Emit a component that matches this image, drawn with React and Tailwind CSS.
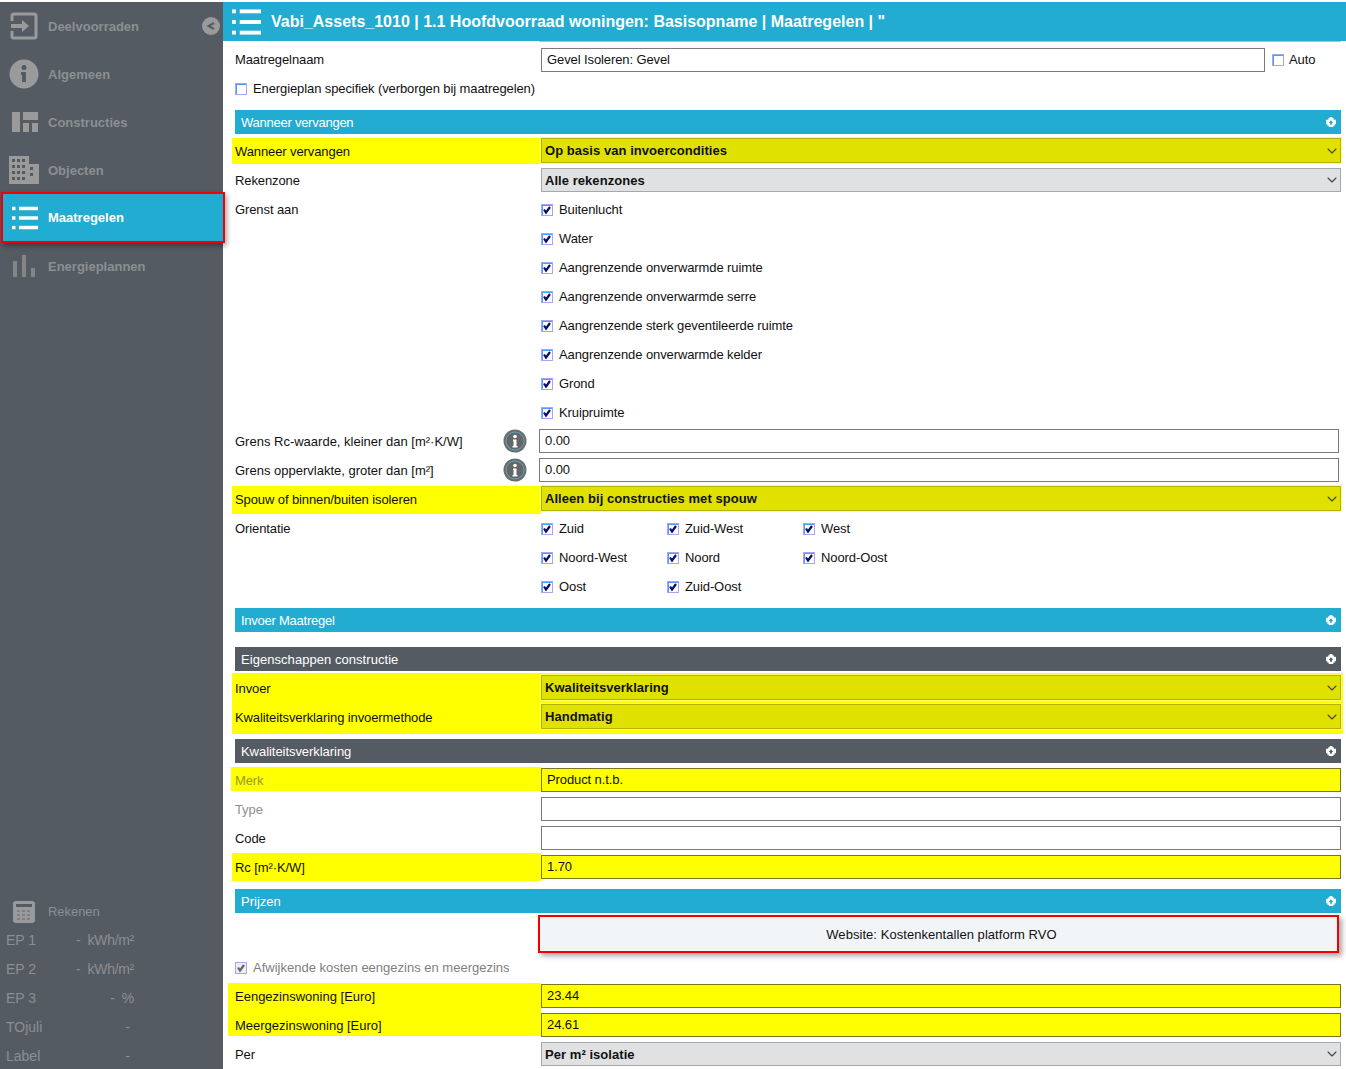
import { ChevronDown } from "lucide-react"

const font = { fontFamily: '"Liberation Sans", Arial, sans-serif' }

const ListIcon = ({ className }) => (
  <svg viewBox="0 0 30 26" className={className} fill="white">
    <rect x="0" y="0" width="4" height="4" />
    <rect x="8" y="0" width="22" height="4" />
    <rect x="0" y="11" width="4" height="4" />
    <rect x="8" y="11" width="22" height="4" />
    <rect x="0" y="22" width="4" height="4" />
    <rect x="8" y="22" width="22" height="4" />
  </svg>
)

const SignInIcon = () => (
  <svg viewBox="0 0 28 28" className="w-[28px] h-[28px]" fill="none" stroke="#9a9a9a">
    <path d="M2 9V4a2 2 0 0 1 2-2h20a2 2 0 0 1 2 2v20a2 2 0 0 1-2 2H4a2 2 0 0 1-2-2v-5" strokeWidth="3" />
    <path d="M1 12h11V8l7 6-7 6v-4H1z" fill="#9a9a9a" stroke="none" />
  </svg>
)

const InfoIcon = () => (
  <svg viewBox="0 0 30 30" className="w-[30px] h-[30px]">
    <circle cx="15" cy="15" r="14.5" fill="#9a9a9a" />
    <circle cx="15" cy="8.5" r="2.5" fill="#555b62" />
    <path d="M12 13h5v10h-4v-7h-1z" fill="#555b62" />
  </svg>
)

const LayoutIcon = () => (
  <svg viewBox="0 0 26 20" className="w-[26px] h-[20px] ml-[1px]" fill="#9a9a9a">
    <rect x="0" y="0" width="8" height="20" />
    <rect x="11" y="0" width="15" height="8" />
    <rect x="11" y="11" width="6" height="9" />
    <rect x="20" y="11" width="6" height="9" />
  </svg>
)

const BuildingIcon = () => (
  <svg viewBox="0 0 30 28" className="w-[30px] h-[28px]" fill="#9a9a9a">
    <path d="M0 0h20v8h10v20H0zM3 3v3h3V3zm5 0v3h3V3zm5 0v3h3V3zM3 9v3h3V9zm5 0v3h3V9zm5 0v3h3V9zM3 15v3h3v-3zm5 0v3h3v-3zm5 0v3h3v-3zm8-4v3h3v-3zm0 6v3h3v-3zM3 21v3h3v-3zm5 0v3h3v-3zm5 0v3h3v-3z" fillRule="evenodd" />
  </svg>
)

const BarsIcon = () => (
  <svg viewBox="0 0 22 22" className="w-[22px] h-[22px]" fill="#858585">
    <rect x="0" y="6" width="4" height="16" />
    <rect x="9" y="0" width="4" height="22" />
    <rect x="18" y="13" width="4" height="9" />
  </svg>
)

const CalcIcon = () => (
  <svg viewBox="0 0 22 22" className="w-[22px] h-[22px]">
    <rect width="22" height="22" rx="3" fill="#9a9a9a" />
    <rect x="3" y="3" width="16" height="3" fill="#555b62" />
    <path d="M4 9h3v2H4zm5 0h3v2H9zm5 0h3v2h-3zM4 13h3v2H4zm5 0h3v2H9zm5 0h3v2h-3zM4 17h3v2H4zm5 0h3v2H9zm5 0h3v2h-3z" fill="#7d8186" />
  </svg>
)

const GearUp = () => (
  <svg viewBox="0 0 11 11" className="w-[10px] h-[10px] mr-[1px]">
    <path
      d="M4 0h3v1.500h1.500V3H11v5H9.500v1.500H8V11H3V9.500H1.500V8H0V3h2.500V1.500H4zM5.500 3.500 3 6.500h1.500V8.500h2V6.500H8z"
      fill="white"
      fillRule="evenodd"
    />
  </svg>
)

const Check = ({ checked = true, muted = false }) => (
  <span className={`w-[12px] h-[12px] shrink-0 border border-[#a4a4f8] flex items-center justify-center ${muted ? "bg-[#eeeeee]" : "bg-white shadow-[inset_1px_1px_0_#4d9bff]"}`}>
    {checked && (
      <svg viewBox="0 0 10 10" className="w-[10px] h-[10px]">
        <path d="M2 4.500 4 7.500 8 2" fill="none" stroke={muted ? "#666666" : "#0c0c66"} strokeWidth="2.2" />
      </svg>
    )}
  </span>
)

const CheckLabel = ({ text, className = "", muted = false }) => (
  <div className={`flex items-center gap-[6px] ${className}`}>
    <Check muted={muted} />
    <span className={muted ? "text-[#808080] tracking-normal" : ""}>{text}</span>
  </div>
)

const Row = ({ children, className = "" }) => (
  <div className={`h-[29px] flex items-center pl-[12px] pr-[5px] ${className}`}>{children}</div>
)

const Label = ({ children, className = "w-[306px]" }) => (
  <span className={`shrink-0 pt-[1px] ${className}`}>{children}</span>
)

const Select = ({ value, yellow }) => (
  <div className={`flex-1 flex items-center justify-between pl-[3px] border font-bold tracking-[0.05px] ${yellow ? "h-[25px] mb-[2px] bg-[#e1e100] border-[#b4b400] shadow-[0_0_0_1px_#ffff70]" : "h-[24px] mb-[1px] bg-[#e0e1e3] border-[#a8a8a8]"}`}>
    <span className="pt-[1px]">{value}</span>
    <ChevronDown className="w-[16px] h-[16px] text-[#444444]" strokeWidth={1.6} />
  </div>
)

const Input = ({ value, yellow, className = "flex-1" }) => (
  <div className={`h-[24px] mb-[1px] flex items-center pl-[5px] border ${yellow ? "bg-[#ffff00] border-[#77771e]" : "bg-white border-[#7a7a7a]"} ${className}`}>
    {value}
  </div>
)

const YellowLabel = ({ children, muted, className = "h-[26px] mb-[1px] pt-[1px] -ml-[3px] pl-[3px] w-[309px]" }) => (
  <div className={`shrink-0 flex items-center bg-[#ffff00] ${muted ? "text-[#9a9a20]" : ""} ${className}`}>
    {children}
  </div>
)

const Section = ({ title, dark, className = "", titleClass = "" }) => (
  <div className={`ml-[12px] mr-[5px] h-[24px] flex items-center justify-between pl-[6px] pr-[4px] text-white ${dark ? "bg-[#555b62]" : "bg-[#23acd1]"} ${className}`}>
    <span className={`pt-[1px] ${titleClass}`}>{title}</span>
    <GearUp />
  </div>
)

const SideItem = ({ icon, text }) => (
  <div className="h-[48px] flex items-center">
    <div className="w-[48px] flex justify-center">{icon}</div>
    <span className="font-bold text-[#8b8f93] pt-[1px]">{text}</span>
  </div>
)

const StatRow = ({ label, value }) => (
  <div className="h-[29px] flex items-center justify-between pl-[6px] pr-[89px] text-[#8b8f93] text-[14px]">
    <span>{label}</span>
    <span className="whitespace-pre tracking-[-0.3px]">{value}</span>
  </div>
)

const Sidebar = () => (
  <div className="w-[223px] shrink-0 bg-[#555b62] flex flex-col relative tracking-normal">
    <SideItem icon={<SignInIcon />} text="Deelvoorraden" />
    <SideItem icon={<InfoIcon />} text="Algemeen" />
    <SideItem icon={<LayoutIcon />} text="Constructies" />
    <SideItem icon={<BuildingIcon />} text="Objecten" />
    <div className="h-[51px] -mt-[2px] -mb-[1px] ml-[1px] -mr-[2px] pl-[9px] relative z-10 flex items-center bg-[#23acd1] border-2 border-[#f00000] shadow-[2px_3px_5px_rgba(0,0,0,0.35)]">
      <ListIcon className="w-[26px] h-[24px]" />
      <span className="ml-[10px] pt-[1px] font-bold text-white">Maatregelen</span>
    </div>
    <SideItem icon={<BarsIcon />} text="Energieplannen" />
    <div className="absolute top-[15px] left-[202px] w-[18px] h-[18px] rounded-full bg-[#9a9a9a] flex items-center justify-center">
      <svg viewBox="0 0 18 18" className="w-[18px] h-[18px]">
        <path d="M12 6 6.500 9l5.500 3" fill="none" stroke="#555b62" strokeWidth="2" />
      </svg>
    </div>
    <div className="mt-auto -mb-[2px]">
      <div className="h-[29px] flex items-center text-[#8b8f93]">
        <div className="w-[48px] flex justify-center">
          <CalcIcon />
        </div>
        <span className="tracking-[-0.05px]">Rekenen</span>
      </div>
      <StatRow label="EP 1" value="-  kWh/m²" />
      <StatRow label="EP 2" value="-  kWh/m²" />
      <StatRow label="EP 3" value="-  %" />
      <div className="h-[29px] flex items-center justify-between pl-[6px] pr-[93px] text-[#8b8f93] text-[14px]">
        <span>TOjuli</span>
        <span>-</span>
      </div>
      <div className="h-[29px] flex items-center justify-between pl-[6px] pr-[93px] text-[#8b8f93] text-[14px]">
        <span>Label</span>
        <span>-</span>
      </div>
    </div>
  </div>
)

const InfoSmall = () => (
  <svg viewBox="0 0 24 24" className="w-[24px] h-[24px]">
    <circle cx="12" cy="12" r="11.500" fill="#6d6d6d" />
    <circle cx="12" cy="12" r="9" fill="#666666" stroke="#52b5d8" strokeWidth="0.800" />
    <circle cx="12" cy="7.500" r="1.800" fill="white" />
    <path d="M10 10.500h3.500V17h1v1.500h-5V17h1v-5h-.500z" fill="white" />
  </svg>
)

const InfoRow = ({ text }) => (
  <Row>
    <Label className="w-[268px] tracking-normal">{text}</Label>
    <div className="w-[24px] mb-[2px] shrink-0">
      <InfoSmall />
    </div>
    <div className="w-[12px] shrink-0" />
    <Input value="0.00" className="flex-1 mr-[2px] !mb-[2px]" />
  </Row>
)

const Content = () => (
  <div className="flex-1 min-w-0">
    <div className="h-[39px] bg-[#23acd1] flex items-center pl-[9px] text-white font-bold text-[16px] tracking-normal">
      <ListIcon className="w-[29px] h-[26px]" />
      <span className="ml-[10px]">Vabi_Assets_1010 | 1.1 Hoofdvoorraad woningen: Basisopname | Maatregelen | "</span>
    </div>
    <div className="h-[1px] ml-[316px] mr-[5px] bg-[#bdbdbd]" />

    <div className="pt-[3px]">
      <Row>
        <Label>Maatregelnaam</Label>
        <Input value="Gevel Isoleren: Gevel" className="flex-1 !mb-0" />
        <div className="w-[76px] flex items-center gap-[5px] pl-[7px]">
          <Check checked={false} />
          <span>Auto</span>
        </div>
      </Row>
      <Row>
        <div className="flex items-center gap-[6px]">
          <Check checked={false} />
          <span>Energieplan specifiek (verborgen bij maatregelen)</span>
        </div>
      </Row>
    </div>

    <Section title="Wanneer vervangen" className="mt-[7px] mb-[3px]" titleClass="tracking-[-0.25px]" />
    <Row>
      <YellowLabel>Wanneer vervangen</YellowLabel>
      <Select value="Op basis van invoercondities" yellow />
    </Row>
    <Row>
      <Label>Rekenzone</Label>
      <Select value="Alle rekenzones" />
    </Row>
    <Row>
      <Label>Grenst aan</Label>
      <CheckLabel text="Buitenlucht" />
    </Row>
    {[
      "Water",
      "Aangrenzende onverwarmde ruimte",
      "Aangrenzende onverwarmde serre",
      "Aangrenzende sterk geventileerde ruimte",
      "Aangrenzende onverwarmde kelder",
      "Grond",
      "Kruipruimte",
    ].map((t) => (
      <Row key={t}>
        <Label />
        <CheckLabel text={t} />
      </Row>
    ))}
    <InfoRow text="Grens Rc-waarde, kleiner dan [m²·K/W]" />
    <InfoRow text="Grens oppervlakte, groter dan [m²]" />
    <Row>
      <YellowLabel className="h-[28px] self-end -ml-[3px] pl-[3px] w-[309px]">Spouw of binnen/buiten isoleren</YellowLabel>
      <Select value="Alleen bij constructies met spouw" yellow />
    </Row>
    <Row>
      <Label>Orientatie</Label>
      <CheckLabel text="Zuid" className="w-[126px]" />
      <CheckLabel text="Zuid-West" className="w-[136px]" />
      <CheckLabel text="West" />
    </Row>
    <Row>
      <Label />
      <CheckLabel text="Noord-West" className="w-[126px]" />
      <CheckLabel text="Noord" className="w-[136px]" />
      <CheckLabel text="Noord-Oost" />
    </Row>
    <Row>
      <Label />
      <CheckLabel text="Oost" className="w-[126px]" />
      <CheckLabel text="Zuid-Oost" className="w-[136px]" />
    </Row>

    <Section title="Invoer Maatregel" className="mt-[7px]" titleClass="tracking-[-0.25px]" />
    <Section title="Eigenschappen constructie" dark className="mt-[15px] mb-[2px]" titleClass="tracking-[0.05px]" />
    <div className="ml-[9px] mr-[3px] bg-[#ffff00] h-[61px] pt-[1px] pl-[3px] pr-[2px]">
      <div className="h-[29px] flex items-center">
        <Label>Invoer</Label>
        <Select value="Kwaliteitsverklaring" yellow />
      </div>
      <div className="h-[29px] flex items-center">
        <Label>Kwaliteitsverklaring invoermethode</Label>
        <Select value="Handmatig" yellow />
      </div>
    </div>

    <Section title="Kwaliteitsverklaring" dark className="mt-[5px] mb-[3px]" titleClass="tracking-[-0.05px]" />
    <Row>
      <YellowLabel muted className="h-[24px] mb-[3px] pt-[3px] -ml-[4px] pl-[4px] w-[310px]">Merk</YellowLabel>
      <Input value="Product n.t.b." yellow />
    </Row>
    <Row>
      <Label className="w-[306px] text-[#8f8f8f]">Type</Label>
      <Input />
    </Row>
    <Row>
      <Label>Code</Label>
      <Input />
    </Row>
    <Row>
      <YellowLabel className="h-[28px] self-start pt-[2px] -ml-[3px] pl-[3px] w-[309px]">Rc [m²·K/W]</YellowLabel>
      <Input value="1.70" yellow />
    </Row>

    <Section title="Prijzen" className="mt-[7px]" titleClass="tracking-normal" />
    <div className="h-[40px] pt-[2px] pl-[315px] pr-[7px]">
      <div className="h-[38px] pt-[1px] pl-[6px] border-[2px] border-[#f00000] bg-[#f1f5f8] flex items-center justify-center tracking-[0.05px] shadow-[3px_3px_5px_rgba(0,0,0,0.35)]">
        Website: Kostenkentallen platform RVO
      </div>
    </div>
    <Row>
      <CheckLabel text="Afwijkende kosten eengezins en meergezins" muted />
    </Row>
    <Row>
      <div className="w-[313px] shrink-0 -ml-[7px] pl-[7px] h-[28px] self-end flex items-center bg-[#ffff00] tracking-normal">Eengezinswoning [Euro]</div>
      <Input value="23.44" yellow />
    </Row>
    <Row>
      <div className="w-[313px] shrink-0 -ml-[7px] pl-[7px] h-[25px] self-start pt-[5px] flex items-center bg-[#ffff00] tracking-normal">Meergezinswoning [Euro]</div>
      <Input value="24.61" yellow />
    </Row>
    <Row>
      <Label>Per</Label>
      <Select value="Per m² isolatie" />
    </Row>
  </div>
)

export default function App() {
  return (
    <div style={font} className="h-[1069px] overflow-hidden bg-white pt-[2px] text-[13px] tracking-[-0.1px] text-[#111111] flex">
      <Sidebar />
      <Content />
    </div>
  )
}
